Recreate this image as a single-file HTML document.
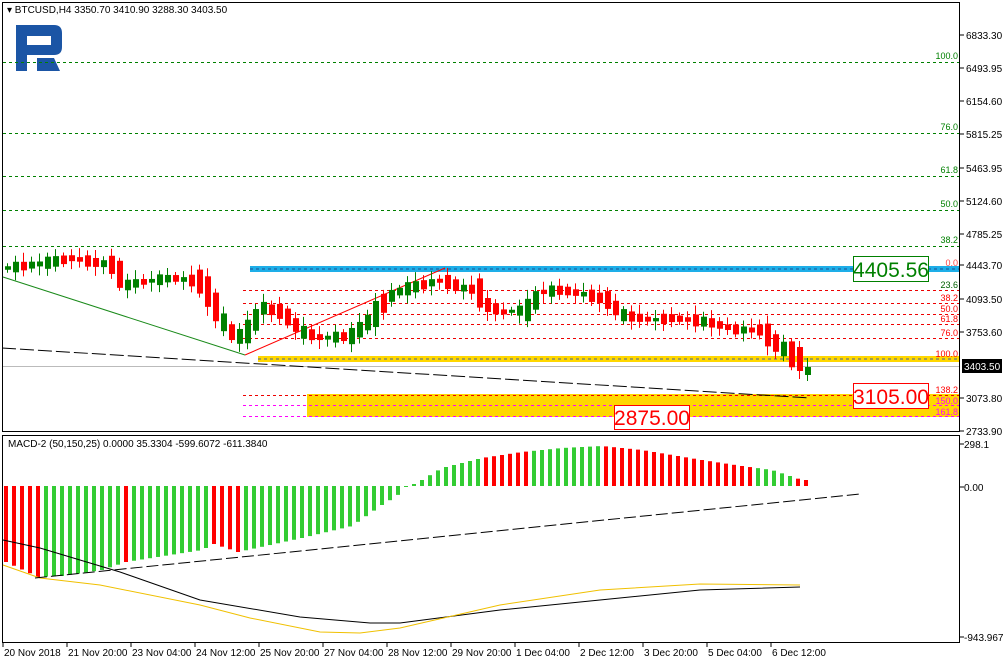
<!DOCTYPE html><html><head><meta charset="utf-8"><style>
body{margin:0;background:#fff;width:1003px;height:664px;overflow:hidden;font-family:"Liberation Sans",sans-serif}
svg{position:absolute;left:0;top:0}
</style></head><body>
<svg id="s" width="1003" height="664" xmlns="http://www.w3.org/2000/svg" font-family="Liberation Sans, sans-serif" font-size="10">
<rect x="0" y="0" width="1003" height="664" fill="#fff"/>
<rect x="2.5" y="2.5" width="957" height="429" fill="none" stroke="#000"/>
<rect x="2.5" y="435.5" width="957" height="207" fill="none" stroke="#000"/>
<path d="M16 25 H54 Q62 25 62 33 V47 Q62 55 54 55 H27 V71 H16 Z M27 36 V45 H51 V36 Z" fill="#1b55a5" fill-rule="evenodd"/>
<path d="M37 58 H54 L60 71 H37 Z" fill="#1b55a5"/>
<text x="7" y="13" font-size="10">▾ BTCUSD,H4  3350.70 3410.90 3288.30 3403.50</text>
<g id="main"></g>
<g id="macd"></g>
<text x="8" y="447" font-size="10">MACD-2 (50,150,25) 0.0000 35.3304 -599.6072 -611.3840</text>
</svg>
<script>
var NS="http://www.w3.org/2000/svg",s=document.getElementById('s'),M=document.getElementById('main'),D=document.getElementById('macd');
function el(p,t,a,txt){var e=document.createElementNS(NS,t);for(var k in a)e.setAttribute(k,a[k]);if(txt)e.textContent=txt;p.appendChild(e);return e;}
function lerp(pts,x){for(var i=0;i<pts.length-1;i++){if(x<=pts[i+1][0]){var a=pts[i],b=pts[i+1];return a[1]+(b[1]-a[1])*(x-a[0])/(b[0]-a[0]);}}return pts[pts.length-1][1];}
function line(p,x1,y1,x2,y2,c,dash,w){el(p,'line',{x1:x1,y1:y1,x2:x2,y2:y2,stroke:c,'stroke-width':w||1,'stroke-dasharray':dash||''});}
[[62,'100.0'],[133,'76.0'],[176,'61.8'],[210,'50.0'],[246,'38.2']].forEach(function(a){line(M,3,a[0]+.5,959,a[0]+.5,'#008000','3,3');el(M,'text',{x:958,y:a[0]-3,'text-anchor':'end',fill:'#008000','font-size':9},a[1]);});
el(M,'rect',{x:307,y:394,width:652,height:23,fill:'#ffd700'});
el(M,'rect',{x:250,y:266,width:709,height:6,fill:'#1eaee8'});
el(M,'rect',{x:258,y:356,width:701,height:6,fill:'#ffd700'});
line(M,250,269,959,269,'#1f4f8f','3,3');line(M,258,359,959,359,'#4060a0','3,3');
line(M,3,366.5,959,366.5,'#bbb');
[[290,'23.6','#006000'],[303,'38.2','#f00'],[314,'50.0','#f00'],[324,'61.8','#f00'],[338,'76.0','#f00'],[395,'138.2','#f00']].forEach(function(a){line(M,243,a[0]+.5,959,a[0]+.5,'#e00','3,3');el(M,'text',{x:958,y:a[0]-2,'text-anchor':'end',fill:a[2],'font-size':9},a[1]);});
[[405,'150.0'],[416,'161.8']].forEach(function(a){line(M,243,a[0]+.5,959,a[0]+.5,'#f0f','3,3');el(M,'text',{x:958,y:a[0]-1,'text-anchor':'end',fill:'#f0f','font-size':9},a[1]);});
el(M,'text',{x:958,y:266,'text-anchor':'end',fill:'#f44','font-size':9},'0.0');
el(M,'text',{x:958,y:357,'text-anchor':'end',fill:'#f00','font-size':9},'100.0');
line(M,3,277,245,355,'#1a8a1a');line(M,245,355,445,268,'#f00');
line(M,2,348,810,398,'#000','14,4');
var mid=[[5,268],[30,265],[50,262],[70,258],[90,262],[110,265],[125,285],[140,282],[170,278],[200,282],[212,305],[225,330],[240,338],[250,325],[260,308],[280,312],[300,332],[320,338],[350,336],[370,318],[385,298],[400,290],[420,285],[440,280],[460,288],[475,290],[485,305],[500,312],[525,310],[540,292],[560,290],[590,296],[605,300],[620,315],[650,320],[670,318],[690,320],[710,323],[735,330],[760,330],[775,345],[790,355],[797,368],[805,370]];
for(var x=5,i=0;x<=805;x+=8,i++){var m=lerp(mid,x),n=lerp(mid,x+8),up=(n<m)^(i%5==2);var h=Math.max(3,Math.abs(n-m)*1.6+2+(i*7%9));var t=m-h/2,c=up?'#008000':'#f00';if(x==797){t=347;h=24;c='#f00';}if(x==805){t=367;h=8;c='#008000';}
line(M,x+2.5,t-3-(i*3%7),x+2.5,t+h+3+(i*5%7),c);el(M,'rect',{x:x,y:t,width:6,height:h,fill:c});}
el(M,'rect',{x:853.5,y:256.5,width:75,height:25,fill:'#fff',stroke:'#008000'});el(M,'text',{x:891,y:277,'text-anchor':'middle','font-size':21,fill:'#008000'},'4405.56');
el(M,'rect',{x:853.5,y:383.5,width:75,height:25,fill:'#fff',stroke:'#f00'});el(M,'text',{x:891,y:404,'text-anchor':'middle','font-size':21,fill:'#f00'},'3105.00');
el(M,'rect',{x:614.5,y:405.5,width:75,height:24,fill:'#fff',stroke:'#f00'});el(M,'text',{x:652,y:425,'text-anchor':'middle','font-size':21,fill:'#f00'},'2875.00');
[[35,'6833.30'],[68,'6493.95'],[101,'6154.60'],[134,'5815.25'],[168,'5463.95'],[201,'5124.60'],[234,'4785.25'],[265,'4443.70'],[299,'4093.50'],[332,'3753.60'],[398,'3073.80'],[431,'2733.90']].forEach(function(a){line(M,960,a[0],964,a[0],'#000');el(M,'text',{x:966,y:a[0]+4,'font-size':10},a[1]);});
el(M,'rect',{x:962,y:359,width:40,height:14,fill:'#000'});el(M,'text',{x:964,y:370,fill:'#fff','font-size':10},'3403.50');
var bars=[[4,562],[36,577],[60,576],[100,570],[124,562],[200,550],[212,544],[236,552],[250,549],[300,538],[350,526],[380,505],[395,496],[404,486],[412,484],[420,480],[440,468],[480,458],[520,452],[560,448],[600,446],[640,450],[700,460],[740,466],[770,470],[800,480]];
function col(x){if(x<=36||x==124||(x>=212&&x<=236)||(x>=484&&x<=526)||(x>=602&&x<=750)||x>=796)return'#f00';return'#33cc33';}
for(var x=4;x<=804;x+=8){var y=lerp(bars,x);var t=Math.min(y,486),h=Math.abs(y-486);if(h<1)h=1;el(D,'rect',{x:x,y:t,width:4,height:h,fill:col(x)});}
function pl(pts,c,dash){el(D,'polyline',{points:pts.map(function(p){return p.join(',')}).join(' '),fill:'none',stroke:c,'stroke-dasharray':dash||''});}
pl([[3,540],[40,548],[120,572],[200,600],[300,617],[370,623],[400,623],[500,610],[600,600],[700,590],[800,587]],'#000');
pl([[3,565],[40,578],[100,585],[200,605],[250,618],[320,632],[360,633],[400,628],[500,605],[600,590],[700,584],[800,585]],'#f0c000');
pl([[35,578],[860,494]],'#000','12,4');
[[444,'298.1'],[487,'0.00'],[637,'-943.9678']].forEach(function(a){line(D,960,a[0],964,a[0],'#000');el(D,'text',{x:964,y:a[0]+4,'font-size':10},a[1]);});
['20 Nov 2018','21 Nov 20:00','23 Nov 04:00','24 Nov 12:00','25 Nov 20:00','27 Nov 04:00','28 Nov 12:00','29 Nov 20:00','1 Dec 04:00','2 Dec 12:00','3 Dec 20:00','5 Dec 04:00','6 Dec 12:00'].forEach(function(t,i){var x=3+i*64;line(D,x,643,x,647,'#000');el(D,'text',{x:x+1,y:656,'font-size':10},t);});
</script>
</body></html>
